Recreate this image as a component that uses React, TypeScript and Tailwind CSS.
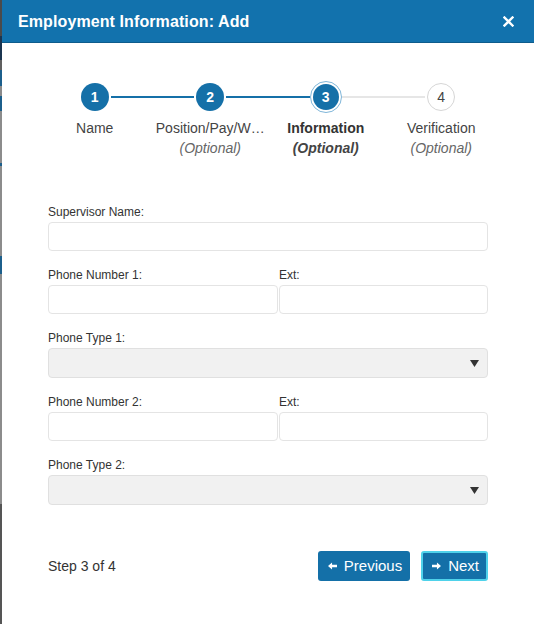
import React from "react";

const font = { fontFamily: '"Liberation Sans", Arial, sans-serif' };

type Step = { n: number; title: string; sub?: string; state: "done" | "active" | "todo" };

const steps: Step[] = [
  { n: 1, title: "Name", state: "done" },
  { n: 2, title: "Position/Pay/W…", sub: "(Optional)", state: "done" },
  { n: 3, title: "Information", sub: "(Optional)", state: "active" },
  { n: 4, title: "Verification", sub: "(Optional)", state: "todo" },
];

function StepItem({ s, i }: { s: Step; i: number }) {
  const leftColor = i === 0 ? "bg-transparent" : steps[i].state === "todo" ? "bg-[#e6e6e6]" : "bg-[#1570a8]";
  const rightColor =
    i === steps.length - 1 ? "bg-transparent" : steps[i + 1].state === "todo" ? "bg-[#e6e6e6]" : "bg-[#1570a8]";
  return (
    <div className="flex flex-col items-center">
      <div className="flex items-center w-full h-[34px]">
        <div className={`flex-1 h-[2px] ${leftColor}`} />
        {s.state === "active" ? (
          <div className="w-[32px] h-[32px] rounded-full border border-[#7fb6d9] flex items-center justify-center bg-white">
            <div className="w-[26px] h-[26px] rounded-full bg-[#1570a8] text-white text-[14px] font-bold flex items-center justify-center">
              {s.n}
            </div>
          </div>
        ) : s.state === "done" ? (
          <div className="mx-[2px] w-[28px] h-[28px] rounded-full bg-[#1570a8] text-white text-[14px] font-bold flex items-center justify-center">
            {s.n}
          </div>
        ) : (
          <div className="mx-[2px] w-[28px] h-[28px] rounded-full bg-white border border-[#d6d6d6] text-[#444] text-[14px] flex items-center justify-center">
            {s.n}
          </div>
        )}
        <div className={`flex-1 h-[2px] ${rightColor}`} />
      </div>
      <div
        className={`mt-[4px] text-[14px] leading-[20px] ${
          s.state === "active" ? "font-bold text-[#333]" : "text-[#444]"
        }`}
      >
        {s.title}
      </div>
      {s.sub && (
        <div className={`text-[14px] leading-[20px] italic ${s.state === "active" ? "font-bold text-[#444]" : "text-[#666]"}`}>
          {s.sub}
        </div>
      )}
    </div>
  );
}

function Label({ children }: { children: React.ReactNode }) {
  return <div className="text-[12px] leading-[14px] text-[#333] mb-[3px]">{children}</div>;
}

function TextBox() {
  return <div className="h-[29px] rounded-[4px] border border-[#e4e4e4] bg-white" />;
}

function SelectBox() {
  return (
    <div className="h-[30px] rounded-[4px] border border-[#e0e0e0] bg-[#f1f1f1] flex items-center justify-end pr-[8px]">
      <svg width="9" height="7" viewBox="0 0 9 7">
        <path d="M0 0 H9 L4.5 7 Z" fill="#333" />
      </svg>
    </div>
  );
}

function PhoneRow({ label }: { label: string }) {
  return (
    <div className="flex gap-[1px]">
      <div className="w-[230px]">
        <Label>{label}</Label>
        <TextBox />
      </div>
      <div className="flex-1">
        <Label>Ext:</Label>
        <TextBox />
      </div>
    </div>
  );
}

function Arrow({ dir }: { dir: "left" | "right" }) {
  return (
    <svg width="9" height="8" viewBox="0 0 10 8" className={dir === "left" ? "" : "rotate-180"}>
      <path d="M0 4 L4.5 0 V2.6 H10 V5.4 H4.5 V8 Z" fill="white" />
    </svg>
  );
}

export default function App() {
  const strip = [
    ["h-[36px]", "bg-[#4a4a4a]"],
    ["h-[24px]", "bg-[#1b3550]"],
    ["h-[10px]", "bg-[#606060]"],
    ["h-[16px]", "bg-[#1c5f8c]"],
    ["h-[10px]", "bg-[#8a8a8a]"],
    ["h-[15px]", "bg-[#1c5f8c]"],
    ["h-[52px]", "bg-[#8c8c8c]"],
    ["h-[3px]", "bg-[#1c5f8c]"],
    ["h-[90px]", "bg-[#8c8c8c]"],
    ["h-[18px]", "bg-[#1c5f8c]"],
    ["h-[230px]", "bg-[#8c8c8c]"],
    ["h-[120px]", "bg-[#555555]"],
  ];
  return (
    <div className="w-[534px] h-[624px] flex bg-white overflow-hidden" style={font}>
      <div className="w-[2px] flex flex-col shrink-0">
        {strip.map(([h, c], k) => (
          <div key={k} className={`${h} ${c}`} />
        ))}
      </div>
      <div className="flex-1 flex flex-col">
        <div className="h-[43px] bg-[#1272ad] flex items-center justify-between pl-[16px] pr-[20px] border-b border-[#0e5c8c]">
          <div className="text-white text-[16px] font-bold tracking-[0.1px] pt-[1px]">Employment Information: Add</div>
          <svg width="11" height="11" viewBox="0 0 11 11">
            <path d="M1.5 1.5 L9.5 9.5 M9.5 1.5 L1.5 9.5" stroke="white" strokeWidth="2.4" strokeLinecap="square" />
          </svg>
        </div>

        <div className="grid grid-cols-4 mx-[35px] mt-[37px]">
          {steps.map((s, i) => (
            <StepItem key={s.n} s={s} i={i} />
          ))}
        </div>

        <div className="px-[46px] mt-[47px] flex flex-col gap-[17px]">
          <div>
            <Label>Supervisor Name:</Label>
            <TextBox />
          </div>
          <PhoneRow label="Phone Number 1:" />
          <div>
            <Label>Phone Type 1:</Label>
            <SelectBox />
          </div>
          <PhoneRow label="Phone Number 2:" />
          <div>
            <Label>Phone Type 2:</Label>
            <SelectBox />
          </div>
        </div>

        <div className="px-[46px] mt-[46px] flex items-center justify-between">
          <div className="text-[14px] text-[#333]">Step 3 of 4</div>
          <div className="flex gap-[11px]">
            <button className="h-[30px] pl-[10px] pr-[8px] rounded-[3px] bg-[#1470a8] text-white text-[15px] flex items-center gap-[7px]">
              <Arrow dir="left" />
              Previous
            </button>
            <button className="h-[30px] pl-[9px] pr-[7px] rounded-[3px] bg-[#1470a8] text-white text-[15px] flex items-center gap-[7px] border-2 border-[#4fd2ea]">
              <Arrow dir="right" />
              Next
            </button>
          </div>
        </div>
      </div>
    </div>
  );
}
